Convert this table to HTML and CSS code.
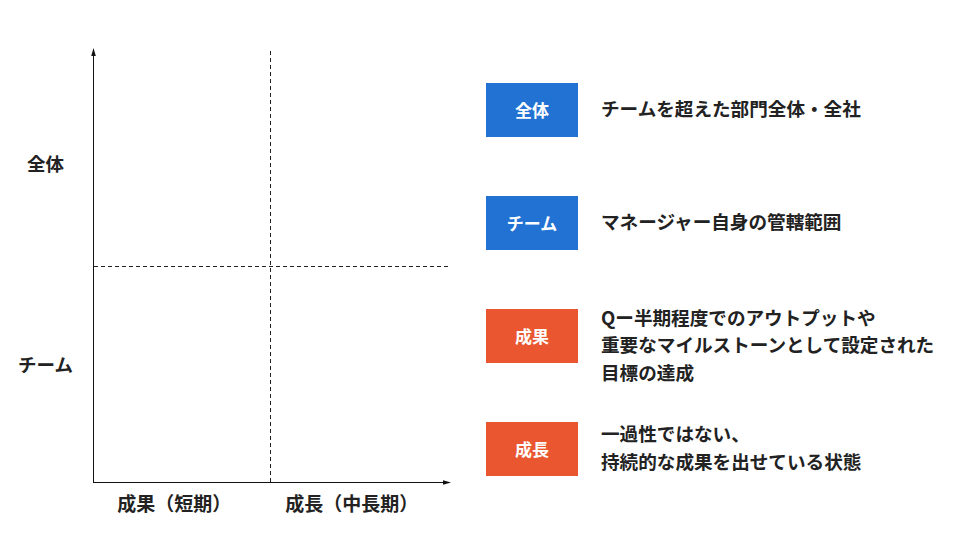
FILE: index.html
```html
<!DOCTYPE html>
<html lang="ja">
<head>
<meta charset="utf-8">
<link rel="stylesheet" href="styles.css">
</head>
<body>
<main class="page">
  <section class="chart">
    <div class="chart-body">
      <div class="ylabels">
        <div class="ylabel ylabel-top">全体</div>
        <div class="ylabel ylabel-bottom">チーム</div>
      </div>
      <div class="plot">
        <svg class="plot-svg" width="360" height="435" viewBox="0 0 360 435">
          <line x1="0.5" y1="4" x2="0.5" y2="434.5" stroke="#111" stroke-width="1"/>
          <polygon points="0.5,0 -1.8,8 2.8,8" fill="#111"/>
          <line x1="0" y1="434.5" x2="354" y2="434.5" stroke="#111" stroke-width="1"/>
          <polygon points="358,434.5 350,432.2 350,436.8" fill="#111"/>
          <line x1="177.5" y1="3" x2="177.5" y2="434" stroke="#222" stroke-width="1" stroke-dasharray="4 3"/>
          <line x1="1" y1="218.5" x2="355" y2="218.5" stroke="#222" stroke-width="1" stroke-dasharray="4 3"/>
        </svg>
      </div>
    </div>
    <div class="xlabels">
      <div class="xlabel">成果（短期）</div>
      <div class="xlabel">成長（中長期）</div>
    </div>
  </section>
  <section class="legend">
    <div class="row">
      <div class="tag tag-blue">全体</div>
      <div class="desc">チームを超えた部門全体・全社</div>
    </div>
    <div class="row">
      <div class="tag tag-blue">チーム</div>
      <div class="desc">マネージャー自身の管轄範囲</div>
    </div>
    <div class="row">
      <div class="tag tag-orange">成果</div>
      <div class="desc desc-shift">Qー半期程度でのアウトプットや<br>重要なマイルストーンとして設定された<br>目標の達成</div>
    </div>
    <div class="row">
      <div class="tag tag-orange">成長</div>
      <div class="desc">一過性ではない、<br>持続的な成果を出せている状態</div>
    </div>
  </section>
</main>
</body>
</html>
```

FILE: styles.css
```css
* {
  box-sizing: border-box;
}

html, body {
  margin: 0;
  padding: 0;
  background: #ffffff;
}

body {
  width: 960px;
  height: 540px;
  overflow: hidden;
  font-family: "Noto Sans CJK JP", "Noto Sans", sans-serif;
  font-weight: 700;
  color: #222222;
}

.page {
  display: flex;
  width: 960px;
  height: 540px;
}

.chart {
  width: 486px;
  padding-top: 48px;
  flex: none;
}

.chart-body {
  display: flex;
  height: 435px;
}

.ylabels {
  width: 93px;
  display: flex;
  flex-direction: column;
}

.ylabel {
  display: flex;
  align-items: center;
  justify-content: center;
  font-size: 18.5px;
  line-height: 24px;
}

.ylabel-top {
  height: 218px;
  padding-top: 12px;
  padding-right: 2px;
}

.ylabel-bottom {
  height: 217px;
  padding-bottom: 21px;
  padding-right: 2px;
}

.plot {
  width: 360px;
  height: 435px;
}

.plot-svg {
  display: block;
  overflow: visible;
}

.xlabels {
  margin-left: 93px;
  margin-top: 8px;
  display: grid;
  grid-template-columns: 177.5px 177.5px;
}

.xlabel {
  text-align: center;
  font-size: 19px;
  line-height: 24px;
  padding-right: 15px;
}

.legend {
  padding-top: 83px;
  display: flex;
  flex-direction: column;
  gap: 59px;
}

.row {
  height: 54px;
  display: flex;
  align-items: center;
}

.tag {
  width: 92px;
  height: 54px;
  flex: none;
  display: flex;
  align-items: center;
  justify-content: center;
  color: #ffffff;
  font-size: 17px;
  line-height: 20px;
}

.tag-blue {
  background: #2272d3;
}

.tag-orange {
  background: #e95630;
}

.desc {
  margin-left: 23px;
  font-size: 18.6px;
  line-height: 27.5px;
  white-space: nowrap;
  margin-bottom: 5px;
}

.desc-shift {
  margin-top: 16px;
  margin-bottom: 0;
}
```
